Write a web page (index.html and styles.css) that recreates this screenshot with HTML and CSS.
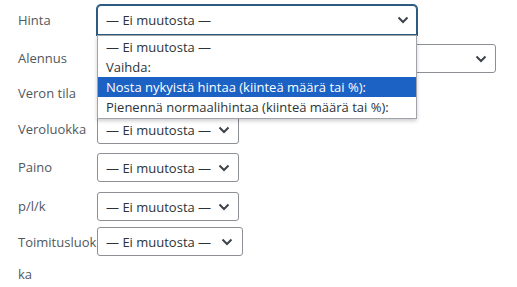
FILE: index.html
```html
<!DOCTYPE html>
<html lang="fi">
<head>
<meta charset="utf-8">
<link rel="stylesheet" href="styles.css">
</head>
<body>
<div class="form">
  <div class="row r-hinta">
    <span class="title">Hinta</span>
    <div class="field">
      <div class="select select--wide select--focus"><span>— Ei muutosta —</span><svg class="chev" viewBox="0 0 12 8"><path d="M1.5 1.5 L6 6 L10.5 1.5"/></svg></div>
      <ul class="dropdown">
        <li>— Ei muutosta —</li>
        <li>Vaihda:</li>
        <li class="active">Nosta nykyistä hintaa (kiinteä määrä tai %):</li>
        <li>Pienennä normaalihintaa (kiinteä määrä tai %):</li>
      </ul>
    </div>
  </div>
  <div class="row r-alennus">
    <span class="title">Alennus</span>
    <div class="field"><div class="select select--wider"><span>— Ei muutosta —</span><svg class="chev" viewBox="0 0 12 8"><path d="M1.5 1.5 L6 6 L10.5 1.5"/></svg></div></div>
  </div>
  <div class="row r-veron">
    <span class="title">Veron tila</span>
    <div class="field"><div class="select"><span>— Ei muutosta —</span><svg class="chev" viewBox="0 0 12 8"><path d="M1.5 1.5 L6 6 L10.5 1.5"/></svg></div></div>
  </div>
  <div class="row r-vero">
    <span class="title">Veroluokka</span>
    <div class="field"><div class="select"><span>— Ei muutosta —</span><svg class="chev" viewBox="0 0 12 8"><path d="M1.5 1.5 L6 6 L10.5 1.5"/></svg></div></div>
  </div>
  <div class="row r-paino">
    <span class="title">Paino</span>
    <div class="field"><div class="select"><span>— Ei muutosta —</span><svg class="chev" viewBox="0 0 12 8"><path d="M1.5 1.5 L6 6 L10.5 1.5"/></svg></div></div>
  </div>
  <div class="row r-plk">
    <span class="title">p/l/k</span>
    <div class="field"><div class="select"><span>— Ei muutosta —</span><svg class="chev" viewBox="0 0 12 8"><path d="M1.5 1.5 L6 6 L10.5 1.5"/></svg></div></div>
  </div>
  <div class="row r-toim">
    <span class="title">Toimitusluok ka</span>
    <div class="field"><div class="select select--toim"><span>— Ei muutosta —</span><svg class="chev" viewBox="0 0 12 8"><path d="M1.5 1.5 L6 6 L10.5 1.5"/></svg></div></div>
  </div>
</div>
</body>
</html>
```
FILE: styles.css
```css
* { box-sizing: border-box; }
html, body { margin: 0; background: #fff; }
body {
  font-family: "Open Sans", "Noto Sans", sans-serif;
  font-size: 13px;
  color: #50575e;
}
.form { padding: 5px 0 0 18px; }
.row { display: flex; align-items: flex-start; }
.title {
  width: 79px;
  flex: none;
  line-height: 29px;
  word-break: break-all;
}
.field { position: relative; }
.select {
  display: flex;
  align-items: center;
  justify-content: space-between;
  height: 29px;
  width: 142px;
  padding: 0 8px 0 8px;
  border: 1px solid #8c8f94;
  border-radius: 3px;
  background: #fff;
  color: #2c3338;
  font-size: 13px;
  white-space: nowrap;
}
.select--wide { width: 320px; height: 30px; padding-right: 7px; }
.select--wider { width: 399px; }
.select--toim { width: 146px; padding-right: 9px; }
.select--focus {
  border-color: #2c5a80;
  box-shadow: 0 0 0 1px #2c5a80;
  border-radius: 4px 4px 0 0;
}
.chev { width: 12px; height: 8px; flex: none; }
.chev path { fill: none; stroke: #3c434a; stroke-width: 2; }
.dropdown {
  position: absolute;
  left: 0;
  top: 30px;
  width: 320px;
  margin: 0;
  padding: 1px 0;
  list-style: none;
  background: #fff;
  border: 1px solid #a0a3a8;
  box-shadow: 0 2px 4px rgba(0,0,0,0.2);
  color: #2c3338;
  z-index: 2;
}
.dropdown li {
  height: 20px;
  line-height: 20px;
  padding-left: 8px;
  white-space: nowrap;
}
.dropdown li.active { background: #1b62c4; color: #fff; }
.r-hinta .title { line-height: 30px; }
.r-alennus { margin-top: 9px; }
.r-veron { margin-top: 6px; }
.r-vero { margin-top: 7px; }
.r-paino { margin-top: 9px; }
.r-plk { margin-top: 10px; }
.r-toim { margin-top: 6px; }
.r-toim .title { line-height: 32px; margin-top: -1px; }
```
